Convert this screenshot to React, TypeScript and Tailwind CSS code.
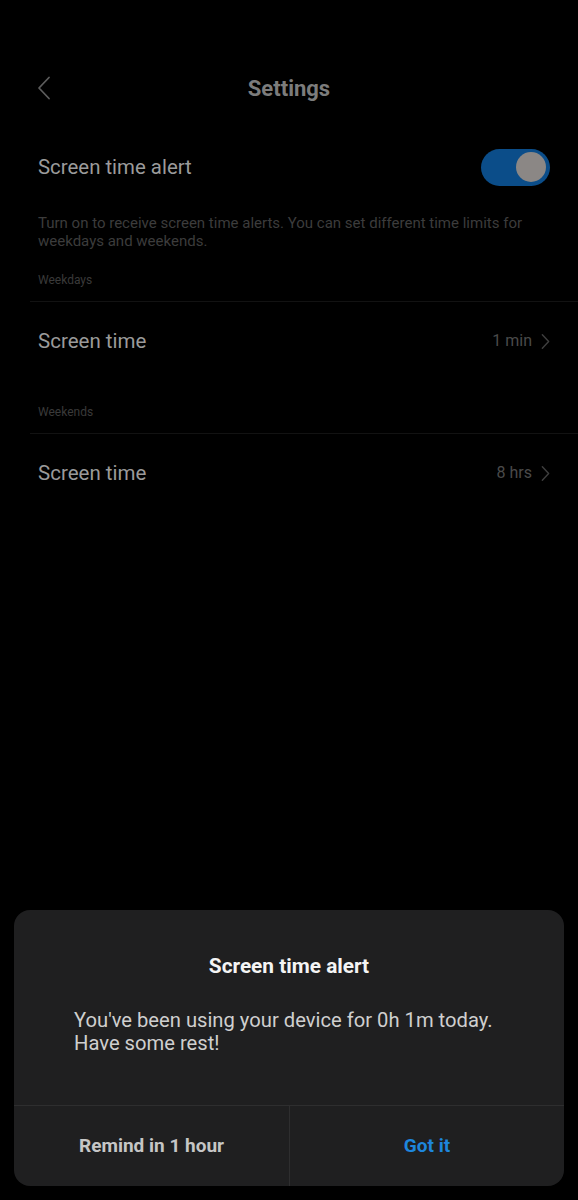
import React from 'react';

function Chevron({ className }: { className?: string }) {
  return (
    <svg viewBox="0 0 10 18" className={className} fill="none" stroke="currentColor" strokeWidth="1.6" strokeLinecap="round" strokeLinejoin="round">
      <path d="M1.5 1.5 L8.5 9 L1.5 16.5" />
    </svg>
  );
}

function BackArrow() {
  return (
    <svg viewBox="0 0 14 24" className="w-[14px] h-[24px] text-[#5c5c5c]" fill="none" stroke="currentColor" strokeWidth="1.8" strokeLinecap="round" strokeLinejoin="round">
      <path d="M12 1.5 L2 12 L12 22.5" />
    </svg>
  );
}

function Toggle() {
  return (
    <div className="w-[69px] h-[37px] rounded-full bg-[#0b4d89] flex items-center justify-end pr-[4px]">
      <div className="w-[30px] h-[30px] rounded-full bg-[#8b8785]" />
    </div>
  );
}

function LimitRow({ value }: { value: string }) {
  return (
    <div className="h-[78px] flex items-center justify-between pl-[38px] pr-[28px]">
      <span className="text-[20.5px] text-[#9a9a9a]">Screen time</span>
      <div className="flex items-center gap-[9px]">
        <span className="text-[16px] text-[#4a4a4a]">{value}</span>
        <Chevron className="w-[9px] h-[17px] text-[#3e3e3e]" />
      </div>
    </div>
  );
}

export default function App() {
  return (
    <div className="relative w-[578px] h-[1200px] bg-black overflow-hidden font-['Roboto',sans-serif]">
      {/* header */}
      <div className="mt-[60px] h-[56px] relative flex items-center justify-center">
        <div className="absolute left-[37px] top-[16px]">
          <BackArrow />
        </div>
        <h1 className="text-[22px] font-bold text-[#7c7c7c]">Settings</h1>
      </div>

      <div className="mt-[14px] h-[74px] flex items-center justify-between pl-[38px] pr-[28px]">
        <span className="text-[20.4px] text-[#9b9b9b]">Screen time alert</span>
        <Toggle />
      </div>

      <p className="mt-[10px] px-[38px] text-[15px] leading-[18px] text-[#3c3c3c] whitespace-nowrap">
        Turn on to receive screen time alerts. You can set different time limits for
        <br />
        weekdays and weekends.
      </p>

      <div className="mt-[23px] px-[38px] text-[12px] leading-[14px] text-[#3a3a3a]">Weekdays</div>
      <div className="mt-[14px] ml-[30px] border-t border-[#121212]" />
      <LimitRow value="1 min" />

      <div className="mt-[25px] px-[38px] text-[12px] leading-[14px] text-[#3a3a3a]">Weekends</div>
      <div className="mt-[14px] ml-[30px] border-t border-[#121212]" />
      <LimitRow value="8 hrs" />

      {/* alert dialog */}
      <div className="absolute left-[14px] right-[14px] bottom-[14px] h-[276px] rounded-[16px] bg-[#1f1f20] flex flex-col">
        <h2 className="pt-[44px] text-center text-[20.8px] leading-[24px] font-bold text-[#f4f4f4]">Screen time alert</h2>
        <p className="mt-[31px] px-[60px] text-[20.2px] leading-[23px] text-[#cfcfcf] whitespace-nowrap">
          You've been using your device for 0h 1m today.
          <br />
          Have some rest!
        </p>
        <div className="mt-auto h-[81px] border-t border-[#2e2e2f] grid grid-cols-2">
          <button className="flex items-center justify-center text-[19px] font-bold text-[#c6c6c6]">Remind in 1 hour</button>
          <button className="flex items-center justify-center text-[19px] font-bold text-[#1e86dc] border-l border-[#2e2e2f]">Got it</button>
        </div>
      </div>
    </div>
  );
}
